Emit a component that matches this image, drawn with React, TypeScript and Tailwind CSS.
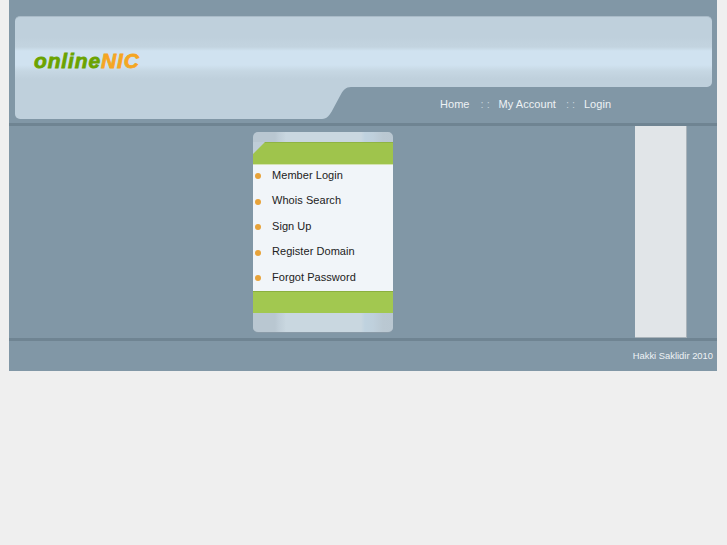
export default function App() {
  const items = ["Member Login", "Whois Search", "Sign Up", "Register Domain", "Forgot Password"];
  const stripes = "linear-gradient(90deg,#b9c7d1 0,#b9c7d1 22px,#c0ced8 26px,#c6d4dd 31px,#c9d7e0 33px,#c9d7e0 108px,#bfd2df 112px,#bfd0dc 120px,#bac8d2 130px,#b9c7d1 140px)";
  return (
    <div className="min-h-[545px] bg-[#efefef] font-['Liberation_Sans',sans-serif]">
      <div className="ml-[9px] flex h-[371px] w-[708px] flex-col bg-[#8197a6]">
        {/* header */}
        <div className="h-[123px] pl-[6px] pr-[5px] pt-4">
          <div className="flex h-[71px] items-start rounded-t-[5px] rounded-br-[5px] border-t border-[#aabbc8] bg-[linear-gradient(180deg,#bfd0dc_0,#bfd0dc_20px,#c3d4e0_30px,#d0e2f0_34px,#d0e2f0_48px,#c6d7e3_54px,#bfd0dc_62px)]">
            <div className="mt-[30px] ml-[19px] flex text-[21px] leading-[28px] font-bold italic tracking-[0.85px]">
              <span className="text-[#6ba300] [-webkit-text-stroke:0.8px_#6ba300]">online</span>
              <span className="text-[#f5a623] [-webkit-text-stroke:0.8px_#f5a623]">NIC</span>
            </div>
          </div>
          <div className="flex h-[32px]">
            <div className="h-full w-[307px] rounded-bl-[5px] bg-[#bfd0dc]" />
            <svg width="29" height="32" viewBox="0 0 29 32" className="shrink-0">
              <path d="M0 32C5 32 8 28 11 22L18 9C21 3 24 0 29 0H0Z" fill="#bfd0dc" />
            </svg>
            <nav className="ml-[89px] flex h-[35px] items-center whitespace-nowrap text-[11px] tracking-[0.05px] text-[#eef2f5]">
              <span>Home</span>
              <span className="ml-[11px] w-[8px] text-center text-[#c5d1d9]">: :</span>
              <span className="ml-[10px]">My Account</span>
              <span className="ml-[10px] w-[8px] text-center text-[#c5d1d9]">: :</span>
              <span className="ml-[10px]">Login</span>
            </nav>
          </div>
        </div>
        <div className="h-[3px] bg-[#6f8492]" />
        {/* content */}
        <div className="flex h-[212px]">
          <div className="ml-[244px] mt-[6px] flex h-[201px] w-[140px] flex-col overflow-hidden rounded-[5px] border-b border-[#8a9ba8]">
            <div className="h-[10px] shrink-0" style={{ background: stripes }} />
            <div className="relative h-[22px] shrink-0 border-t border-[#8fb443] bg-[#9fc44c]">
              <svg width="12" height="12" viewBox="0 0 12 12" className="absolute left-0 -top-px">
                <path d="M0 0H12L0 12Z" fill="#bfcdd7" />
              </svg>
            </div>
            <ul className="h-[127px] shrink-0 border-t border-[#d4e2b0] bg-[#f1f5f9] text-[11px] tracking-[0.05px] text-[#222]">
              {items.map((t, i) => (
                <li key={t} className={`flex h-[25px] -translate-y-[2px] items-center ${i === 2 || i === 4 ? "mt-px" : ""}`}>
                  <span className={`ml-[2px] h-[6px] w-[6px] rounded-full bg-[#e8a33a] ${i === 1 || i === 3 ? "translate-y-px" : ""}`} />
                  <span className="ml-[11px]">{t}</span>
                </li>
              ))}
            </ul>
            <div className="h-[22px] shrink-0 border-t border-[#8bb03f] bg-[#a2c850]" />
            <div className="flex-1" style={{ background: stripes }} />
          </div>
          <div className="ml-[242px] h-[212px] w-[52px] border-r border-b border-[#a9b3ba] bg-[#e1e5e8]" />
        </div>
        <div className="h-[3px] bg-[#6f8492]" />
        {/* footer */}
        <div className="flex flex-1 items-center justify-end pr-[4px] text-[9.4px] text-[#eef2f5]">
          Hakki Saklidir 2010
        </div>
      </div>
    </div>
  );
}
